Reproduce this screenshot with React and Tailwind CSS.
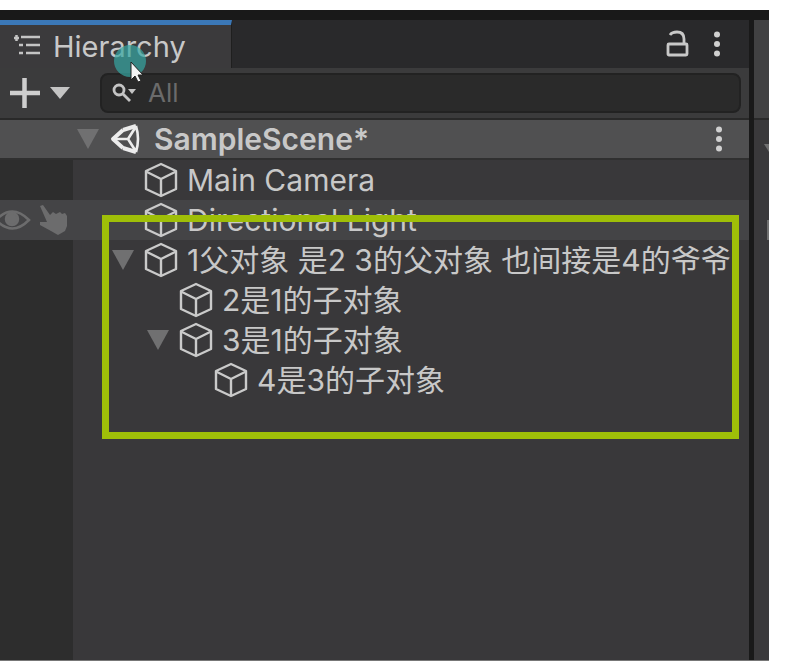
const FONT = 'font-[Inter,"Noto_Sans_CJK_SC",sans-serif]';

function CubeIcon() {
  return (
    <svg className="h-9 w-9 shrink-0" viewBox="0 0 36 36" fill="none" stroke="#cacaca" strokeWidth="2.4" strokeLinejoin="round" aria-hidden="true">
      <path d="M18 2 L33 9 V27 L18 34 L3 27 V9 Z" />
      <path d="M3 9.500 L18 17 L33 9.500 M18 17 V34" />
    </svg>
  );
}

function Kebab() {
  return (
    <svg className="h-7 w-2" viewBox="0 0 8 28" fill="#d0d0d0" aria-hidden="true">
      <circle cx="4" cy="4.500" r="3" />
      <circle cx="4" cy="14" r="3" />
      <circle cx="4" cy="23.500" r="3" />
    </svg>
  );
}

function Foldout({ label }) {
  return (
    <button type="button" aria-label={label} aria-expanded="true" className="flex h-9 w-6 shrink-0 items-center justify-center">
      <svg className="h-5 w-6" viewBox="0 0 24 20" fill="#707071" aria-hidden="true">
        <path d="M1 0 H23 L12 20 Z" />
      </svg>
    </button>
  );
}

function UnityIcon() {
  return (
    <svg className="h-8 w-8" viewBox="0 0 32 32" fill="none" stroke="#ececec" strokeWidth="2.6" strokeLinejoin="round" aria-hidden="true">
      <path d="M13 7 L26 3 M13 25 L26 29 M13 7 L3 16 L13 25" strokeWidth="4" />
      <path d="M26 3 Q30 16 26 29 M3 16 H18 M18 16 L25 5 M18 16 L25 27" />
    </svg>
  );
}

function TreeRow({ name, indent, foldout, hovered }) {
  return (
    <li className={hovered ? 'flex h-10 bg-[#444446]' : 'flex h-10'}>
      <div className={hovered ? 'flex w-[73px] shrink-0 items-center gap-2' : 'w-[73px] shrink-0 bg-[#2d2d2d]'}>
        {hovered && (
          <>
            <button type="button" aria-label="Toggle visibility" className="h-8 w-[31px]">
              <svg className="h-8 w-[31px]" viewBox="0 0 31 32" fill="none" stroke="#6c6c6d" strokeWidth="2.500" aria-hidden="true">
                <path d="M-4 16 Q12 -1 29 16 Q12 33 -4 16 Z" />
                <circle cx="12" cy="15" r="6" fill="#6c6c6d" />
              </svg>
            </button>
            <button type="button" aria-label="Toggle picking" className="h-8 w-7">
              <svg className="h-8 w-7" viewBox="0 0 28 32" fill="#6c6c6d" aria-hidden="true">
                <path d="M1 2 L4 1 L11 11 L14 8 L17 10 L21 8 L23 10 L26 9 L28 12 V22 L26 27 L19 31 L12 27 L1 21 V18 L8 18 Z" />
              </svg>
            </button>
          </>
        )}
      </div>
      <div className={`flex min-w-0 flex-1 items-center ${indent}`}>
        {foldout ? <Foldout label={`Collapse ${name}`} /> : <span className="w-6 shrink-0" />}
        <span className="ml-2 flex shrink-0 items-center gap-2">
          <CubeIcon />
          <span className="whitespace-nowrap">{name}</span>
        </span>
      </div>
    </li>
  );
}

const objects = [
  { name: 'Main Camera', indent: 'pl-[38px]' },
  { name: 'Directional Light', indent: 'pl-[38px]', hovered: true },
  { name: '1父对象 是2 3的父对象 也间接是4的爷爷', indent: 'pl-[38px]', foldout: true },
  { name: '2是1的子对象', indent: 'pl-[73px]' },
  { name: '3是1的子对象', indent: 'pl-[73px]', foldout: true },
  { name: '4是3的子对象', indent: 'pl-[108px]' },
];

export default function App() {
  return (
    <div className={`flex min-h-screen bg-white pt-[10px] pr-[22px] pb-[5px] text-[30px] leading-10 text-[#c8c8c8] ${FONT}`}>
      <div className="flex flex-1 border-b border-[#777] bg-[#191919] pt-[10px]">
        <main className="flex min-w-0 flex-1 flex-col bg-[#39383a]">
          <header className="flex h-12 items-stretch justify-between bg-[#29292b]">
            <div className="relative flex w-[232px] items-center border-t-[5px] border-r border-t-[#3b78b8] border-r-[#1f1f1f] bg-[#3b3a3c] pl-[14px]">
              <svg className="h-6 w-7" viewBox="0 0 28 24" stroke="#c4c4c4" strokeWidth="2.500" aria-hidden="true">
                <path d="M7 2 H26 M12 10 H26 M12 18 H26 M5 10 H9 M5 18 H9 M0 3 H5 M2.500 0 V6" />
              </svg>
              <h1 className="ml-[11px] text-[29px]">Hierarchy</h1>
              <svg className="absolute top-[15px] left-[114px] h-11 w-8" viewBox="0 0 32 44" aria-hidden="true">
                <circle cx="16" cy="21" r="16" fill="#36a6a2" fillOpacity="0.7" />
                <path d="M17 22 V40 L21 36 L24 42 L27 41 L24 35 H29 Z" fill="#f4f4f4" stroke="#222" strokeWidth="1" />
              </svg>
            </div>
            <div className="flex items-center gap-6 pr-[28px]">
              <button type="button" aria-label="Lock">
                <svg className="h-7 w-6" viewBox="0 0 24 28" fill="none" stroke="#c8c8c8" strokeWidth="2.800" aria-hidden="true">
                  <rect x="3" y="14" width="19" height="11" rx="1" />
                  <path d="M5 5 Q7 2 12 2 Q19 2 19 9 V14" />
                </svg>
              </button>
              <button type="button" aria-label="Panel menu"><Kebab /></button>
            </div>
          </header>

          <div className="flex h-[52px] items-center border-b-2 border-[#292929] bg-[#3b3b3c] pr-2 pl-2">
            <button type="button" aria-label="Create" className="flex items-center gap-2">
              <svg className="h-8 w-8" viewBox="0 0 32 32" stroke="#cecece" strokeWidth="4.500" aria-hidden="true">
                <path d="M16.500 1 V31 M2 16 H32" />
              </svg>
              <svg className="h-3 w-6" viewBox="0 0 24 12" fill="#c4c4c4" aria-hidden="true">
                <path d="M2 0 H22 L12 12 Z" />
              </svg>
            </button>
            <label className="ml-7 flex h-10 min-w-0 flex-1 items-center rounded-lg border-2 border-[#222] bg-[#2a2a2a] pl-[10px]">
              <svg className="h-6 w-6 shrink-0" viewBox="0 0 24 24" fill="none" stroke="#c4c4c4" strokeWidth="2.800" aria-hidden="true">
                <circle cx="7" cy="9" r="5" />
                <path d="M11 13 L18 20" />
                <path d="M16 8 H24 L20 13 Z" fill="#c4c4c4" stroke="none" />
              </svg>
              <input type="text" aria-label="Search" placeholder="All" className="ml-3 min-w-0 flex-1 bg-transparent text-[26px] leading-8 outline-none placeholder:text-[#6b6b6b]" />
            </label>
          </div>

          <div className="flex h-10 items-center border-b-2 border-[#303030] bg-[#505051] pr-[26px] pl-[76px]">
            <Foldout label="Collapse SampleScene" />
            <span className="ml-[10px]"><UnityIcon /></span>
            <h2 className="ml-3 flex-1 font-semibold">SampleScene*</h2>
            <button type="button" aria-label="Scene menu"><Kebab /></button>
          </div>

          <div className="relative flex flex-1 flex-col">
            <ul>
              {objects.map((o) => <TreeRow key={o.name} {...o} />)}
            </ul>
            <div className="w-[73px] flex-1 bg-[#2d2d2d]" />
            <div className="pointer-events-none absolute top-[55px] right-[10px] left-[102px] h-56 border-[7px] border-[#9fbf08]" />
          </div>
        </main>
        <aside className="ml-[5px] flex w-[15px] flex-col bg-[#3a393b]">
          <div className="h-[100px] border-b-2 border-[#292929] bg-[#414142]" />
          <svg className="mt-6 h-32 w-full" viewBox="0 0 15 128" fill="#707070" aria-hidden="true">
            <path d="M10 0 H15 V8 Z M13 76 H15 V96 H13 Z" />
          </svg>
        </aside>
      </div>
    </div>
  );
}
